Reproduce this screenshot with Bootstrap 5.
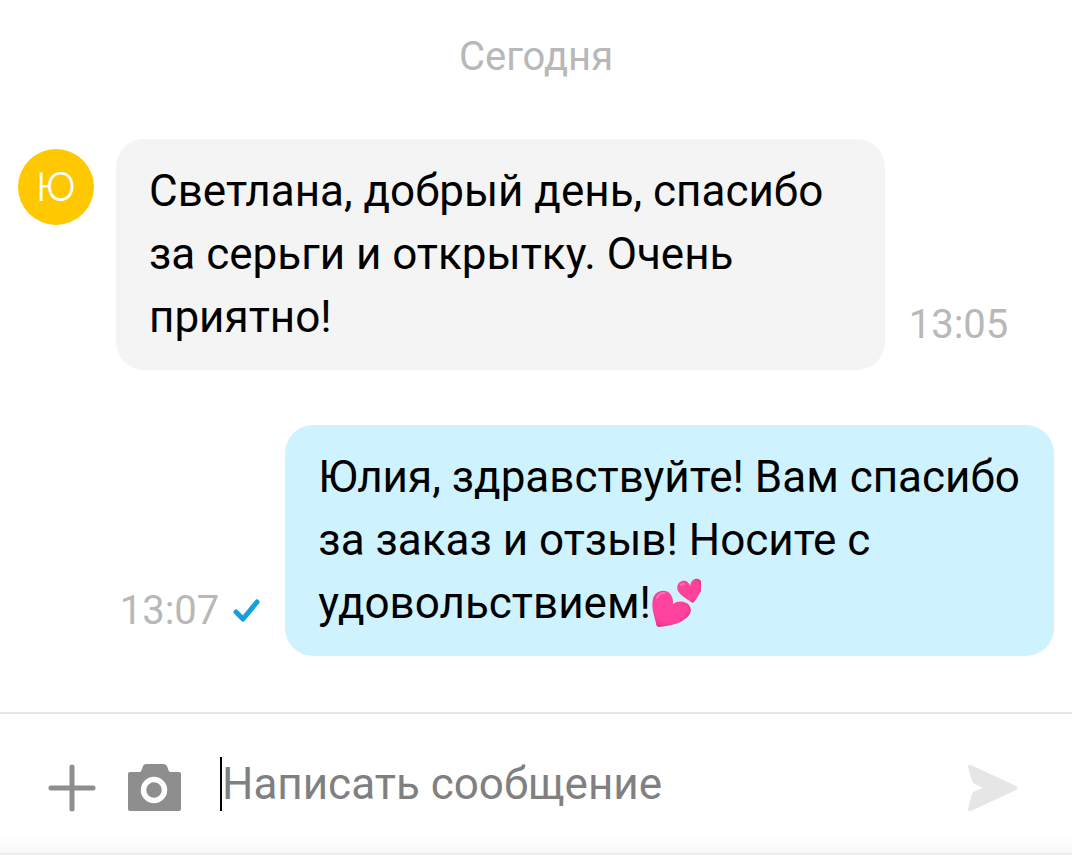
<!DOCTYPE html>
<html lang="ru">
<head>
<meta charset="utf-8">
<meta name="viewport" content="width=device-width, initial-scale=1">
<title>Сообщения</title>
<link href="https://cdn.jsdelivr.net/npm/bootstrap@5.3.0/dist/css/bootstrap.min.css" rel="stylesheet">
<style>
body { font-family: Roboto, "Noto Sans", sans-serif; color: #000; background: #fff; }
.muted-text { font-size: 40px; line-height: 48px; color: #b8b8b8; }
.avatar { width: 76px; height: 76px; margin-top: 10px; background: #ffc800; color: #fff; font-family: Inter, "Noto Sans", sans-serif; font-size: 40px; line-height: 48px; font-weight: 300; }
.day-label { padding-top: 33px; margin-bottom: 58px; }
.message { padding: 0 18px; margin-bottom: 55px; }
.bubble { width: 74.2%; border-radius: 28px; padding: 21px 33px; font-size: 44px; line-height: 63px; }
.bubble-in { background: #f4f4f4; margin-left: 22px; }
.bubble-out { background: #cff2ff; }
.stamp { padding-bottom: 21px; }
.hearts { width: 50px; height: 50px; vertical-align: -10px; }
.composer { border-top: 2px solid #e6e6e8; border-bottom: 2px solid #ededf0; padding: 43px 48px 41px; margin-bottom: 1px; background: linear-gradient(#fff 88%, #f7f7f8); }
.tool-btn { color: #8e8e8e; }
.send-btn { color: #e6e6e6; }
.entry { font-size: 44px; line-height: 52px; height: 54px; min-width: 0; margin: 0 0 1px 31px; border: 0; border-left: 2px solid #000; outline: 0; background: transparent; padding: 0; }
.entry::placeholder { color: #808080; opacity: 1; }
</style>
</head>
<body>
<div class="d-flex flex-column min-vh-100">
  <main class="flex-grow-1">
    <div class="day-label muted-text text-center">Сегодня</div>

    <div class="message d-flex align-items-start">
      <div class="avatar rounded-circle d-flex align-items-center justify-content-center flex-shrink-0">Ю</div>
      <div class="bubble bubble-in flex-shrink-0">Светлана, добрый день, спасибо за серьги и открытку. Очень приятно!</div>
      <div class="stamp muted-text align-self-end ms-4">13:05</div>
    </div>

    <div class="message d-flex justify-content-end">
      <div class="stamp muted-text align-self-end d-flex align-items-center">13:07
        <svg class="me-4" width="42" height="24" viewBox="0 0 42 24" fill="none" stroke="#149fde" stroke-width="5" stroke-linecap="round" stroke-linejoin="round" role="img" aria-label="Доставлено"><path d="M17 13l7 7L38 3"/></svg>
      </div>
      <div class="bubble bubble-out flex-shrink-0">Юлия, здравствуйте! Вам спасибо за заказ и отзыв! Носите с <span class="text-nowrap">удовольствием!<svg class="hearts" viewBox="0 0 50 50" role="img" aria-label="Два сердца">
        <defs><radialGradient id="pink" cx=".45" cy=".45" r=".65"><stop offset=".65" stop-color="#ff429c"/><stop offset="1" stop-color="#dc2f82"/></radialGradient></defs>
        <g fill="url(#pink)"><path d="M8 49C6 49 5 47 5 45 3 37 0 29 2 21c2-9 14-11 18-4 2 3 2 6 2 9 5-4 13-3 16 1 4 5 1 11-4 14-6 5-16 7-26 8z"/><path d="M40 24c-4-3-10-6-13-11-2-4 0-9 4-10 4-1 7 1 8 5 1-5 4-8 8-7 4 1 5 6 4 10-2 4-5 9-8 13-1 1-2 1-3 0z"/></g>
        <path d="M6 20c1-3 4-5 7-5M30 7c1-1 2-1 3-1" fill="none" stroke="#ff73b8" stroke-width="2" stroke-linecap="round"/>
      </svg></span></div>
    </div>
  </main>

  <form class="composer d-flex align-items-end">
    <button type="button" class="tool-btn btn p-0 border-0 d-flex" aria-label="Прикрепить">
      <svg width="48" height="48" viewBox="0 0 48 48" stroke="currentColor" stroke-width="5" stroke-linecap="round"><path d="M24 3v42M3 24h42"/></svg>
    </button>
    <button type="button" class="tool-btn btn p-0 border-0 d-flex ms-4" aria-label="Камера">
      <svg width="69" height="48" viewBox="0 0 69 48"><path fill="currentColor" d="M10 8h10q1 0 2-3l1-3q1-2 3-2h17q3 0 4 2l1 3q1 3 2 3h9q2 0 2 2v35q0 2-2 2H10q-2 0-2-2V10q0-2 2-2z"/><circle cx="34" cy="26" r="10.5" fill="none" stroke="#fff" stroke-width="5.5"/></svg>
    </button>
    <input type="text" class="entry flex-grow-1" placeholder="Написать сообщение" aria-label="Написать сообщение">
    <button type="button" class="send-btn btn p-0 border-0 d-flex" aria-label="Отправить">
      <svg width="56" height="48" viewBox="0 0 56 48"><path fill="currentColor" d="M3 1l45 21q3 2 0 4L3 47q-3 1-3-2l4-15q1-2 3-3l8-3-8-4q-2-1-3-3L0 3q0-3 3-2z"/></svg>
    </button>
  </form>
</div>
<script src="https://cdn.jsdelivr.net/npm/bootstrap@5.3.0/dist/js/bootstrap.bundle.min.js"></script>
</body>
</html>
